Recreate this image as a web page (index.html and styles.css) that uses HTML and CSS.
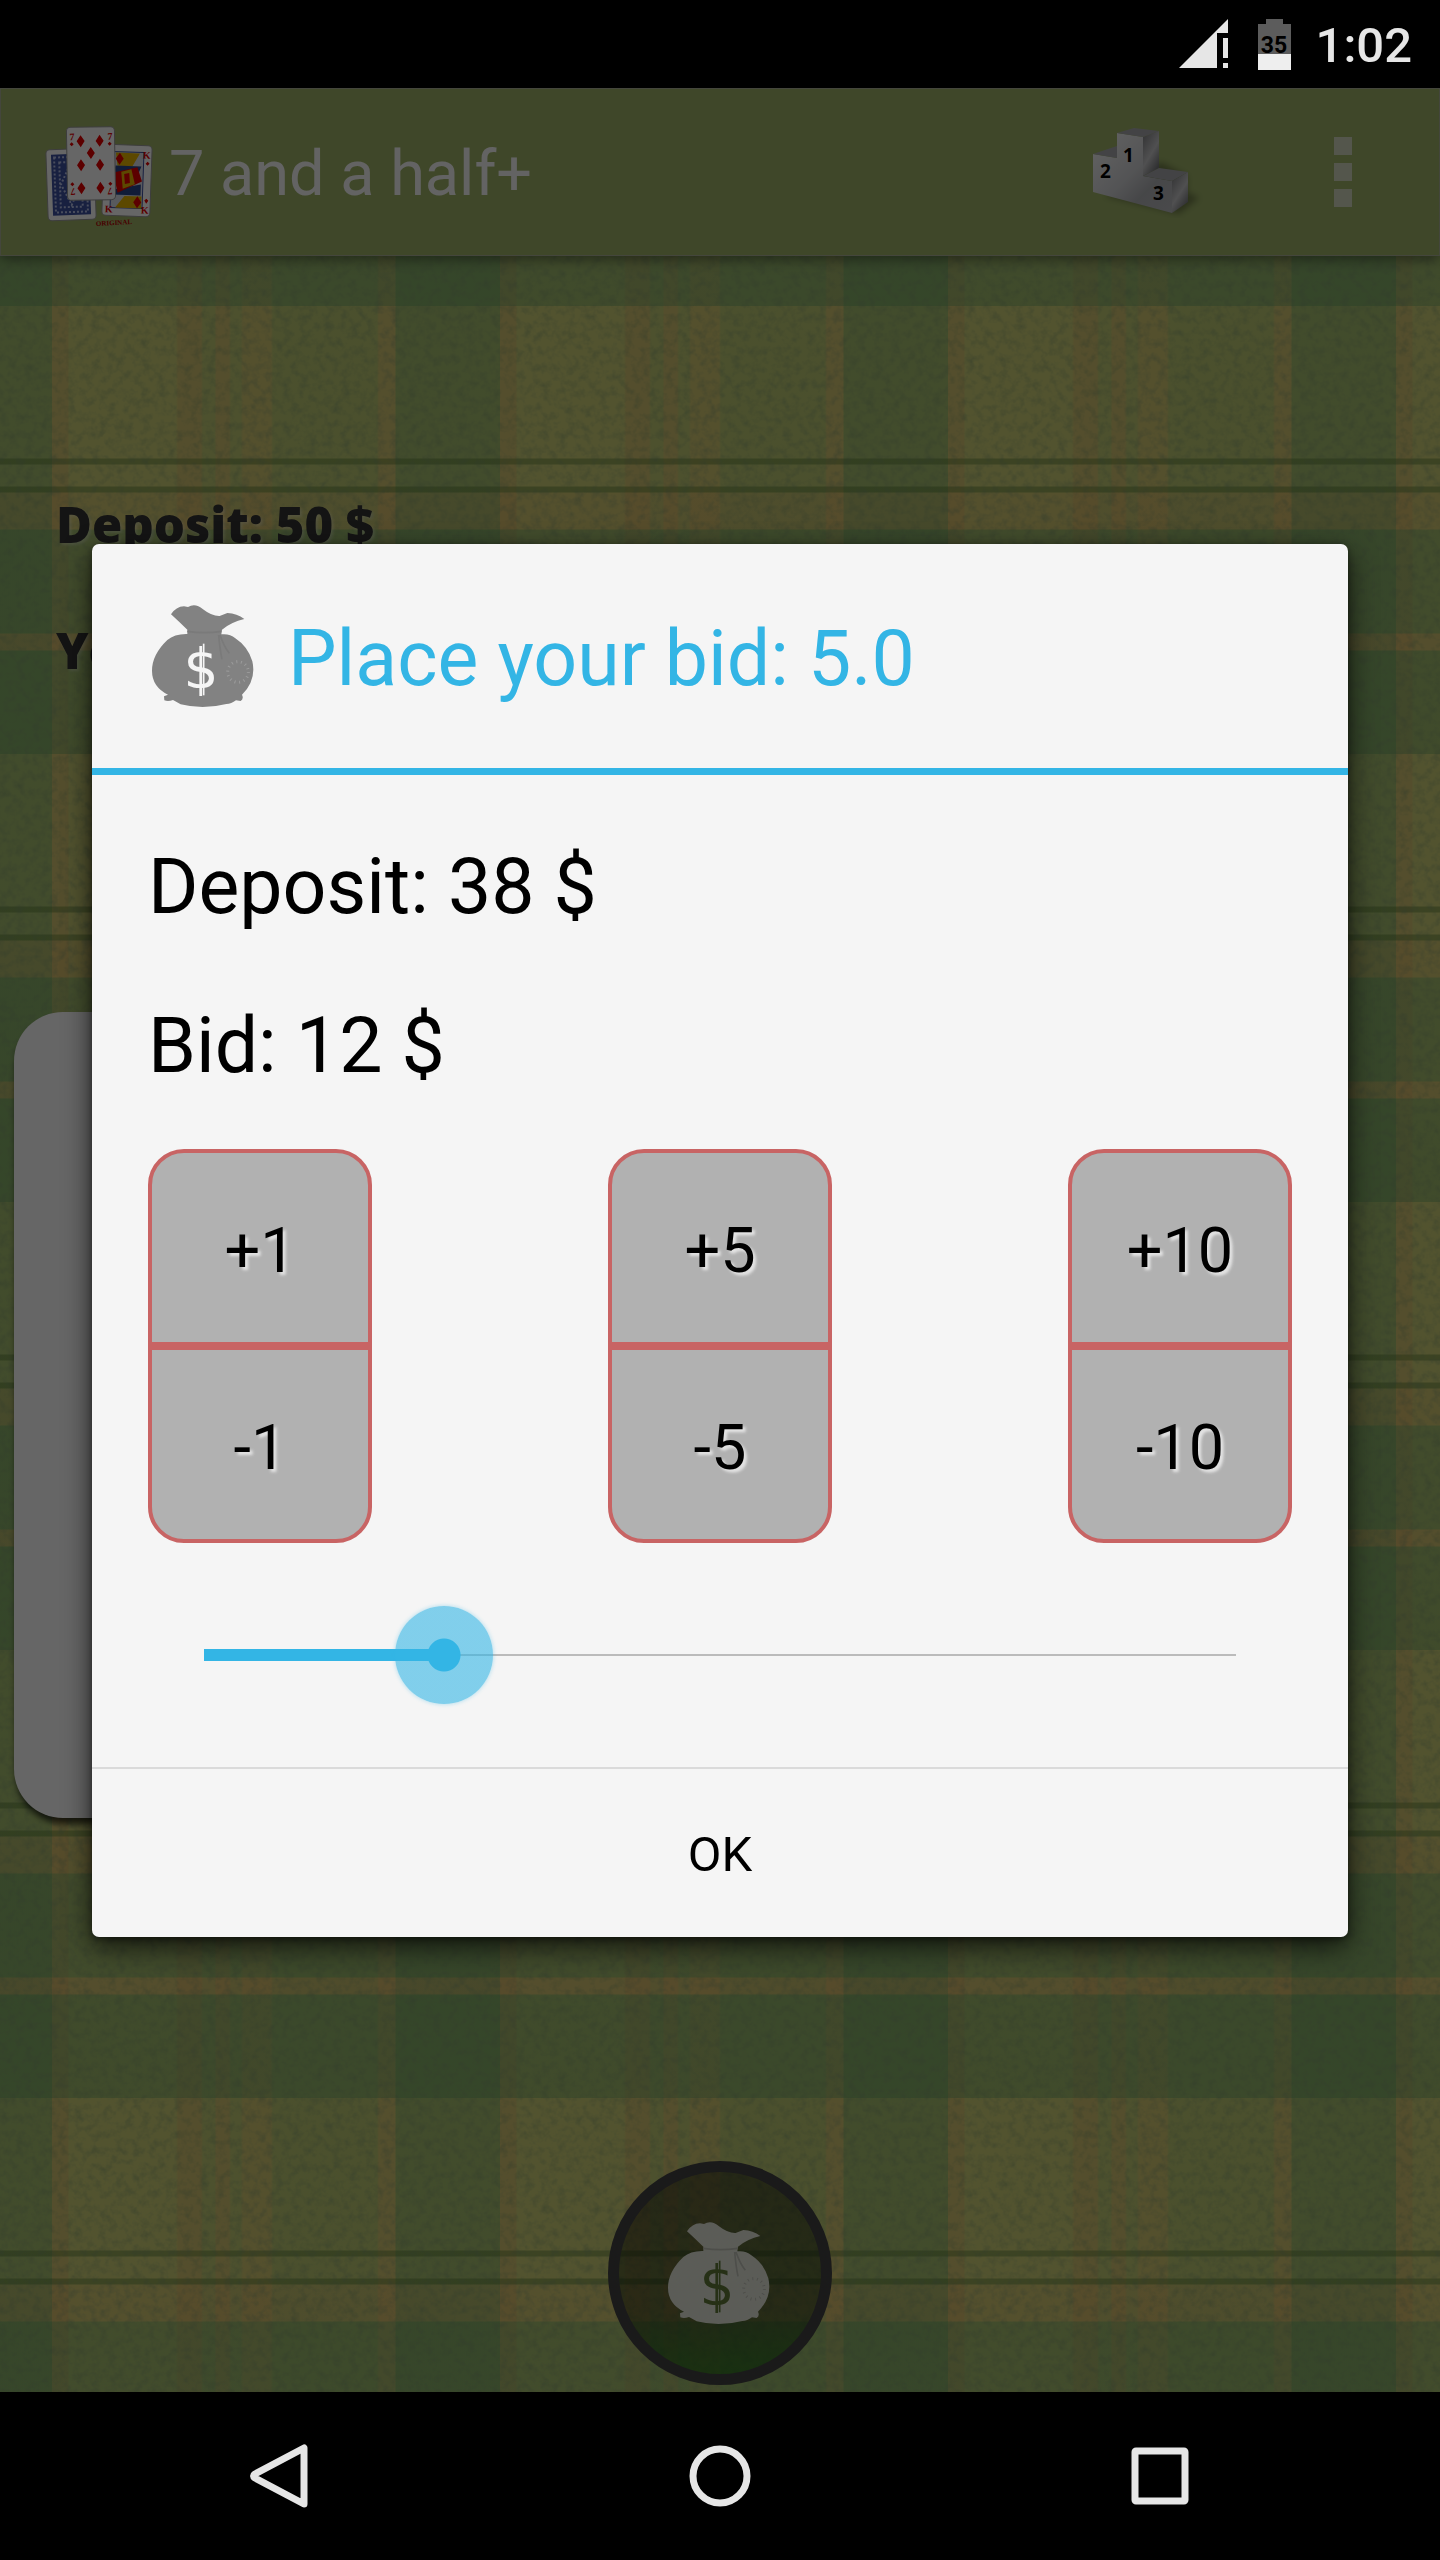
FILE: index.html
```html
<!DOCTYPE html>
<html lang="en">
<head>
    <meta charset="UTF-8">
    <meta name="viewport" content="width=device-width, initial-scale=1.0">
    <title>7 and a half+</title>
    <link rel="stylesheet" href="styles.css">
</head>
<body>
    <!-- Status bar -->
    <div class="status-bar">
        <svg class="signal" viewBox="0 0 50 50" aria-hidden="true">
            <path d="M0 49 L49 0 V14 H38 V49 Z"/>
            <path d="M44 19 H49 V39 H44 Z M44 44 H49 V49 H44 Z"/>
        </svg>
        <svg class="battery" viewBox="0 0 33 51" aria-hidden="true">
            <path class="battery-empty" d="M8 0 H25 V5 H33 V35 H0 V5 H8 Z"/>
            <path class="battery-full" d="M0 35 H33 V51 H0 Z"/>
            <text x="16" y="34" text-anchor="middle">35</text>
        </svg>
        <span class="clock">1:02</span>
    </div>

    <div class="stage">
        <!-- App bar -->
        <header class="app-bar">
            <svg class="app-icon" viewBox="0 0 126 112" aria-hidden="true">
                <g transform="rotate(-2 42 68)">
                    <rect class="card-face" x="18" y="33" width="48" height="71" rx="4"/>
                    <rect class="card-back" x="23" y="38" width="38" height="61"/>
                    <rect class="card-line" x="26" y="41" width="32" height="55"/>
                    <rect class="card-line" x="31" y="46" width="22" height="45"/>
                    <path class="card-line" d="M42 48 L52 68 L42 89 L32 68 Z"/>
                </g>
                <g transform="rotate(2 98 64)">
                    <rect class="card-face" x="74" y="29" width="48" height="71" rx="4"/>
                    <path class="king-line" d="M82 36 H114 V92 H82 Z"/>
                    <path class="gold" d="M86 37 H110 L103 50 H88 Z M87 92 L96 80 H113 V92 Z"/>
                    <path class="blue" d="M86 50 H112 L108 60 H84 Z M84 74 L112 68 V79 H84 Z"/>
                    <path class="red" d="M84 57 L108 51 L113 65 L89 77 Z"/>
                    <path class="gold" d="M92 56 L102 53 L106 68 L94 73 Z"/>
                    <path class="red" d="M95 58 L100 57 L101 67 L96 68 Z"/>
                    <path class="red" d="M90 37 L94 43 L90 49 L86 43 Z M109 80 L113 86 L109 92 L105 86 Z M118 45 L120 47 L118 49 L116 47 Z M118 82 L120 84 L118 87 L116 84 Z"/>
                    <text class="pip" x="113" y="42">K</text>
                    <text class="pip" x="113" y="97">K</text>
                    <text class="pip" x="77" y="97">K</text>
                </g>
                <g transform="rotate(-1 62 47)">
                    <rect class="card-face" x="38" y="11" width="48" height="73" rx="4"/>
                    <path class="red" d="M52 19 L56 25 L52 31 L48 25 Z M71 19 L75 25 L71 31 L67 25 Z M62 31 L66 37 L62 43 L58 37 Z M52 43 L56 49 L52 55 L48 49 Z M71 43 L75 49 L71 55 L67 49 Z M52 66 L56 72 L52 78 L48 72 Z M71 66 L75 72 L71 78 L67 72 Z"/>
                    <path class="red" d="M43 26 L45 28 L43 30 L41 28 Z M81 26 L83 28 L81 30 L79 28 Z M43 66 L45 68 L43 70 L41 68 Z M81 66 L83 68 L81 70 L79 68 Z"/>
                    <text class="pip" x="41" y="24">7</text>
                    <text class="pip" x="79" y="24">7</text>
                    <text class="pip" x="-46" y="-72" transform="rotate(180)">7</text>
                    <text class="pip" x="-83" y="-72" transform="rotate(180)">7</text>
                </g>
                <text class="stamp" x="67" y="110" transform="rotate(-3 67 110)">ORIGINAL</text>
            </svg>
            <h1 class="app-title">7 and a half+</h1>
            <button class="bar-button scores" aria-label="High scores">
                <svg class="podium" viewBox="0 0 112 92" aria-hidden="true">
                    <defs>
                        <linearGradient id="front" x1="0" y1="0" x2="1" y2="1">
                            <stop offset="0" stop-color="#fafafa"/>
                            <stop offset="0.5" stop-color="#d0d1d4"/>
                            <stop offset="0.7" stop-color="#b0b1b5"/>
                            <stop offset="1" stop-color="#b8b9bd"/>
                        </linearGradient>
                        <linearGradient id="side" x1="0" y1="0" x2="0.6" y2="1">
                            <stop offset="0" stop-color="#7c7d80"/>
                            <stop offset="0.6" stop-color="#c8c8ca"/>
                            <stop offset="1" stop-color="#77787c"/>
                        </linearGradient>
                    </defs>
                    <path class="podium-shadow" d="M14 70 L88 88 L108 72 L96 66 L96 50 L70 36 Z"/>
                    <path fill="url(#front)" d="M2 28 L26 32 V7 L52 11 V50 L81 55 V87 L2 66 Z"/>
                    <path fill="url(#side)" d="M52 11 L68 5 V42 L52 50 Z"/>
                    <path fill="url(#side)" d="M81 55 L97 46 V76 L81 87 Z"/>
                    <path fill="#a8a9ac" d="M2 28 L26 20 V32 Z M26 7 L43 2 L68 5 L52 11 Z M52 50 L68 42 L97 46 L81 55 Z"/>
                    <text x="32" y="36">1</text>
                    <text x="9" y="52">2</text>
                    <text x="62" y="74">3</text>
                </svg>
            </button>
            <button class="bar-button more" aria-label="More options">
                <span class="dot"></span>
                <span class="dot"></span>
                <span class="dot"></span>
            </button>
        </header>

        <!-- Table -->
        <main class="table">
            <svg class="grain" aria-hidden="true">
                <filter id="cloth" x="0" y="0" width="100%" height="100%">
                    <feTurbulence type="fractalNoise" baseFrequency="0.12" numOctaves="3" seed="7"/>
                    <feColorMatrix values="0 0 0 0 0.2  0 0 0 0 0.3  0 0 0 0 0.15  0.9 0 0 0 -0.37"/>
                </filter>
                <rect width="100%" height="100%" filter="url(#cloth)"/>
            </svg>
            <div class="score">
                <p>Deposit: 50 $</p>
                <p>You</p>
            </div>
            <div class="card"></div>
            <button class="bid-button" aria-label="Place bid">
                <svg class="bag" viewBox="0 0 336 336" aria-hidden="true">
                    <path class="bag-shape" d="M69 43 Q84 20 108 19 L120 21 Q142 8 165 28 Q192 49 215 48 L238 39 Q267 40 289 57 Q250 66 222 89 L220 103 Q245 100 262 115 Q300 140 313 184 Q326 240 282 284 Q288 297 278 303 L264 301 Q250 312 235 312 Q165 330 98 313 L75 300 Q60 306 49 301 L48 289 L60 284 Q12 260 12 212 Q12 164 58 120 Q80 101 118 102 V89 Q94 66 69 43 Z"/>
                    <path class="bag-crease" d="M118 94 Q170 102 220 94 M212 105 Q216 150 222 178 M216 105 Q228 140 244 160"/>
                    <circle class="bag-patch" cx="270" cy="216" r="31"/>
                    <text x="159" y="263" text-anchor="middle">$</text>
                    <path class="bag-bar" d="M167 131 V286"/>
                </svg>
            </button>
        </main>

        <!-- Bid dialog -->
        <div class="scrim">
            <div class="dialog" role="dialog" aria-labelledby="dialog-title">
                <div class="dialog-header">
                    <svg class="bag" viewBox="0 0 336 336" aria-hidden="true">
                        <path class="bag-shape" d="M69 43 Q84 20 108 19 L120 21 Q142 8 165 28 Q192 49 215 48 L238 39 Q267 40 289 57 Q250 66 222 89 L220 103 Q245 100 262 115 Q300 140 313 184 Q326 240 282 284 Q288 297 278 303 L264 301 Q250 312 235 312 Q165 330 98 313 L75 300 Q60 306 49 301 L48 289 L60 284 Q12 260 12 212 Q12 164 58 120 Q80 101 118 102 V89 Q94 66 69 43 Z"/>
                        <path class="bag-crease" d="M118 94 Q170 102 220 94 M212 105 Q216 150 222 178 M216 105 Q228 140 244 160"/>
                        <circle class="bag-patch" cx="270" cy="216" r="31"/>
                        <text x="159" y="263" text-anchor="middle">$</text>
                        <path class="bag-bar" d="M167 131 V286"/>
                    </svg>
                    <h2 class="dialog-title" id="dialog-title">Place your bid: 5.0</h2>
                </div>
                <div class="dialog-body">
                    <p class="amount">Deposit: 38 $</p>
                    <label class="amount" for="bid">Bid: 12 $</label>
                    <div class="steppers">
                        <div class="stepper">
                            <button class="step">+1</button>
                            <button class="step">-1</button>
                        </div>
                        <div class="stepper">
                            <button class="step">+5</button>
                            <button class="step">-5</button>
                        </div>
                        <div class="stepper">
                            <button class="step">+10</button>
                            <button class="step">-10</button>
                        </div>
                    </div>
                    <input class="slider" id="bid" type="range" min="2" max="45" value="12" style="--fill: 0.2326">
                </div>
                <button class="ok-button">OK</button>
            </div>
        </div>
    </div>

    <!-- Navigation bar -->
    <nav class="nav-bar">
        <button class="nav-button" aria-label="Back">
            <svg viewBox="0 0 72 72"><path d="M60 8 V64 L11 38 Q8 36 11 34 Z"/></svg>
        </button>
        <button class="nav-button" aria-label="Home">
            <svg viewBox="0 0 72 72"><circle cx="36" cy="36" r="27"/></svg>
        </button>
        <button class="nav-button" aria-label="Recent apps">
            <svg viewBox="0 0 72 72"><rect x="11" y="11" width="50" height="50" rx="1"/></svg>
        </button>
    </nav>
</body>
</html>
```
FILE: styles.css
```css
* {
    box-sizing: border-box;
}

body {
    margin: 0;
    min-height: 100vh;
    display: flex;
    flex-direction: column;
    background-color: #000;
    font-family: Roboto, sans-serif;
}

button {
    border: none;
    padding: 0;
    background: none;
    font-family: inherit;
    cursor: pointer;
}

p,
h1,
h2 {
    margin: 0;
    font-weight: inherit;
}

/* Status bar */
.status-bar {
    height: 88px;
    padding: 0 28px;
    display: flex;
    justify-content: flex-end;
    align-items: center;
    color: #e6e6e6;
}

.signal {
    width: 50px;
    height: 50px;
    margin-right: 29px;
    fill: #e6e6e6;
}

.battery {
    width: 33px;
    height: 51px;
    margin-right: 25px;
    font-size: 23px;
    font-weight: 700;
}

.battery-empty {
    fill: #5c5c5c;
}

.battery-full {
    fill: #eee;
}

.clock {
    padding-top: 4px;
    font-size: 49px;
    font-weight: 500;
    line-height: 60px;
}

/* Everything between the system bars */
.stage {
    flex: 1;
    display: flex;
    flex-direction: column;
    position: relative;
}

/* App bar */
.app-bar {
    height: 168px;
    padding: 0 40px 0 28px;
    display: flex;
    align-items: center;
    background-color: #9eb267;
    border: 1px solid #aab097;
    box-shadow: 0 4px 12px rgba(0, 0, 0, 0.4);
    position: relative;
    z-index: 1;
}

.app-icon {
    width: 126px;
    height: 112px;
    margin-right: 14px;
}

.card-face {
    fill: #fff;
    stroke: #999;
    stroke-width: 1;
}

.card-back {
    fill: #3c50a0;
}

.card-line {
    fill: none;
    stroke: #b4bee6;
    stroke-width: 2;
    stroke-dasharray: 2 2;
}

.king-line {
    fill: #dde0ea;
    stroke: #3c50a0;
    stroke-width: 1;
}

.gold {
    fill: #e6b400;
}

.blue {
    fill: #28468c;
}

.red {
    fill: #e60000;
}

.pip {
    fill: #e60000;
    font-family: "Liberation Serif", serif;
    font-size: 10px;
    font-weight: 700;
}

.stamp {
    fill: #b40000;
    font-family: "Liberation Serif", serif;
    font-size: 7px;
    font-weight: 700;
}

.app-title {
    flex: 1;
    padding-top: 4px;
    color: #f8f8f8;
    font-size: 63px;
    font-weight: 400;
    line-height: 74px;
}

.bar-button {
    height: 112px;
}

.scores {
    width: 112px;
    margin-right: 84px;
}

.podium {
    display: block;
    width: 112px;
    height: 92px;
    font-family: "Open Sans", sans-serif;
    font-size: 19px;
    font-weight: 700;
}

.podium-shadow {
    fill: rgba(0, 0, 0, 0.3);
    filter: blur(3px);
}

.more {
    width: 112px;
    display: flex;
    flex-direction: column;
    justify-content: center;
    align-items: center;
    gap: 8px;
}

.dot {
    width: 18px;
    height: 18px;
    background-color: #d2d8be;
}

/* Table with a checked cloth */
.table {
    flex: 1;
    padding: 0 7px 7px;
    display: flex;
    flex-direction: column;
    position: relative;
    background-color: #cdd076;
    background-image:
        linear-gradient(transparent 0 152px, rgba(70, 110, 40, 0.4) 153px 158px, transparent 159px 180px, rgba(70, 110, 40, 0.4) 181px 186px, rgba(235, 150, 90, 0.15) 187px 223px, rgba(80, 150, 95, 0.32) 224px 327px, rgba(235, 150, 90, 0.2) 328px 344px, rgba(80, 150, 95, 0.36) 345px 448px),
        linear-gradient(90deg, rgba(235, 150, 90, 0.2) 0 16px, transparent 17px 124px, rgba(235, 150, 90, 0.2) 126px 149px, rgba(80, 150, 95, 0.1) 151px 163px, rgba(235, 150, 90, 0.2) 164px 177px, rgba(80, 150, 95, 0.1) 179px 189px, rgba(235, 150, 90, 0.15) 191px 219px, rgba(80, 150, 95, 0.14) 221px 325px, rgba(235, 150, 90, 0.18) 327px 343px, rgba(80, 150, 95, 0.32) 344px 448px);
    background-size: 448px 448px;
    background-position: 52px 50px;
}

.grain {
    position: absolute;
    top: 0;
    left: 0;
    width: 100%;
    height: 100%;
}

.score {
    padding: 237px 0 0 49px;
    color: #323232;
    font-family: "Open Sans", sans-serif;
    font-size: 49px;
    font-weight: 800;
    line-height: 63px;
    text-shadow: 2px 2px 3px rgba(255, 255, 255, 0.3);
    position: relative;
}

.score p + p {
    margin-top: 63px;
}

.card {
    width: 560px;
    height: 806px;
    margin: 330px 7px 0;
    border-radius: 49px;
    background-color: #fff;
    box-shadow: 2px 6px 6px rgba(0, 0, 0, 0.7);
    position: relative;
}

.bid-button {
    width: 224px;
    height: 224px;
    margin: auto auto 0;
    display: flex;
    justify-content: center;
    align-items: center;
    border: 11px solid #424242;
    border-radius: 50%;
    background-image: linear-gradient(rgba(0, 0, 0, 0.5), rgba(0, 20, 0, 0.5) 70%, rgba(0, 80, 0, 0.6));
    position: relative;
}

.bag {
    width: 112px;
    height: 112px;
    font-family: "DejaVu Sans", sans-serif;
    font-size: 165px;
}

.bag-crease,
.bag-patch,
.bag-bar {
    fill: none;
    stroke-width: 5;
}

.bag-patch {
    stroke-dasharray: 3 11;
    stroke-width: 9;
}

.bid-button .bag-shape {
    fill: #e4e6da;
}

.bid-button .bag-crease,
.bid-button .bag-patch {
    stroke: #c0c2b8;
}

.bid-button .bag-bar {
    stroke: #5f7838;
}

.bid-button text {
    fill: #5f7838;
}

/* Dialog */
.scrim {
    position: absolute;
    inset: 0;
    z-index: 2;
    padding: 0 92px;
    display: flex;
    align-items: center;
    background-color: rgba(0, 0, 0, 0.6);
}

.dialog {
    flex: 1;
    display: flex;
    flex-direction: column;
    border-radius: 7px;
    background-color: #f5f5f5;
    box-shadow: 0 10px 28px rgba(0, 0, 0, 0.7), 0 2px 6px rgba(0, 0, 0, 0.4);
}

.dialog-header {
    height: 231px;
    padding: 0 56px;
    display: flex;
    align-items: center;
    gap: 28px;
    border-bottom: 7px solid #33b5e5;
}

.dialog-header .bag-shape {
    fill: #828282;
}

.dialog-header .bag-crease {
    stroke: #7a7a7a;
}

.dialog-header .bag-patch {
    stroke: #9c9c9c;
}

.dialog-header .bag-bar {
    stroke: #f5f5f5;
}

.dialog-header text {
    fill: #f5f5f5;
}

.dialog-title {
    padding-top: 7px;
    color: #33b5e5;
    font-size: 77px;
    font-weight: 400;
    line-height: 90px;
}

.dialog-body {
    padding: 67px 56px 63px;
    display: flex;
    flex-direction: column;
}

.amount {
    color: #000;
    font-size: 77px;
    line-height: 90px;
}

.amount + .amount {
    margin-top: 69px;
}

.steppers {
    margin-top: 58px;
    display: flex;
    justify-content: space-between;
}

.stepper {
    width: 224px;
    display: flex;
    flex-direction: column;
}

.step {
    height: 197px;
    padding-top: 7px;
    border: 4px solid #c86464;
    background-color: #b1b1b1;
    color: #000;
    font-size: 63px;
    line-height: 74px;
    text-shadow: 3px 3px 3px #e4e4e4;
}

.step:first-child {
    border-radius: 36px 36px 0 0;
}

.step:last-child {
    border-radius: 0 0 36px 36px;
}

.slider {
    -webkit-appearance: none;
    appearance: none;
    height: 98px;
    margin: 63px 7px 0;
    background:
        linear-gradient(#33b5e5, #33b5e5) 49px center / calc((100% - 98px) * var(--fill)) 12px no-repeat,
        linear-gradient(#bbb, #bbb) center / calc(100% - 98px) 2px no-repeat;
}

.slider::-webkit-slider-thumb {
    -webkit-appearance: none;
    width: 98px;
    height: 98px;
    border-radius: 50%;
    background: radial-gradient(circle, #33b5e5 0 16px, rgba(51, 181, 229, 0.6) 17px);
    box-shadow: 0 0 4px rgba(51, 181, 229, 0.4);
}

.ok-button {
    height: 170px;
    padding-top: 4px;
    border-top: 2px solid #dadada;
    color: #000;
    font-size: 49px;
    line-height: 56px;
}

/* Navigation bar */
.nav-bar {
    height: 168px;
    padding: 0 60px;
    display: flex;
}

.nav-button {
    flex: 1;
    display: flex;
    justify-content: center;
    align-items: center;
}

.nav-button svg {
    width: 72px;
    height: 72px;
    fill: none;
    stroke: #e6e6e6;
    stroke-width: 7;
    stroke-linejoin: round;
}
```
